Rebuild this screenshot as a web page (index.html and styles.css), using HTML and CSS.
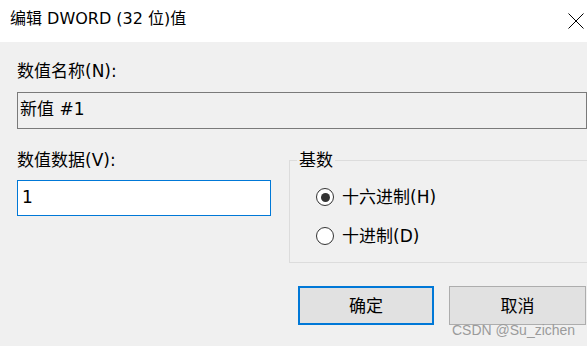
FILE: index.html
```html
<!DOCTYPE html>
<html lang="zh-CN">
	<head>
		<meta charset="UTF-8" />
		<title>编辑 DWORD (32 位)值</title>
		<link rel="stylesheet" href="styles.css">
	</head>
	<body>
		<div class="dialog">
			<div class="titlebar">
				<span class="title">编辑 DWORD (32 位)值</span>
				<svg class="close" width="16" height="16" viewBox="0 0 16 16">
					<path d="M0.5 0.5L15.5 15.5M15.5 0.5L0.5 15.5" stroke="#000" stroke-width="1" fill="none" />
				</svg>
			</div>

			<div class="content">
				<div class="label">数值名称(N):</div>
				<div class="field readonly">新值 #1</div>

				<div class="row">
					<div class="data">
						<div class="label">数值数据(V):</div>
						<div class="field edit">1</div>
					</div>

					<fieldset class="base">
						<legend>基数</legend>
						<div class="radios">
							<label class="radio checked"><span class="dot"></span>十六进制(H)</label>
							<label class="radio"><span class="dot"></span>十进制(D)</label>
						</div>
					</fieldset>
				</div>

				<div class="buttons">
					<div class="btn default">确定</div>
					<div class="btn">取消</div>
				</div>
			</div>

			<div class="watermark">CSDN @Su_zichen</div>
		</div>
	</body>
</html>
```

FILE: styles.css
```css
:root {
	--face: #f0f0f0;
	--accent: #0078d7;
	--btn-face: #e1e1e1;
	--btn-border: #adadad;
}

* {
	box-sizing: border-box;
	margin: 0;
	padding: 0;
}

body {
	font-family: "DejaVu Sans", "Noto Sans CJK SC", sans-serif;
	font-size: 17px;
	color: #000;
	background: var(--face);
	width: 587px;
	height: 346px;
	overflow: hidden;
}

.dialog {
	position: relative;
	height: 100%;
}

.titlebar {
	height: 42px;
	background: #fff;
	display: flex;
	align-items: center;
	justify-content: space-between;
	padding: 0 3px 4px 10px;
}

.title {
	font-size: 16px;
	line-height: 20px;
}

.close {
	display: block;
	margin-top: 3px;
}

.content {
	padding: 19px 1px 0 17px;
}

.label {
	line-height: 20px;
}

.field {
	line-height: 20px;
	display: flex;
	align-items: center;
}

.readonly {
	margin-top: 11px;
	margin-right: -1px;
	height: 37px;
	border: 1px solid #7a7a7a;
	background: var(--face);
	padding: 0 0 4px 2px;
}

.row {
	display: grid;
	grid-template-columns: 254px 1fr;
	column-gap: 18px;
	margin-top: 21px;
}

.edit {
	margin-top: 10px;
	height: 36px;
	border: 1px solid var(--accent);
	background: #fff;
	padding: 0 0 2px 4px;
}

.base {
	border: 1px solid #dcdcdc;
	margin-right: -3px;
	min-width: 0;
}

.base legend {
	margin-left: 7px;
	padding: 0 2px;
	line-height: 20px;
}

.radios {
	display: flex;
	flex-direction: column;
	gap: 19px;
	padding: 17px 0 16px 26px;
}

.radio {
	display: flex;
	align-items: center;
	gap: 8px;
	line-height: 20px;
}

.dot {
	width: 18px;
	height: 18px;
	border: 1px solid #333;
	border-radius: 50%;
	background: #fff;
	display: flex;
	align-items: center;
	justify-content: center;
}

.checked .dot::after {
	content: "";
	width: 9px;
	height: 9px;
	border-radius: 50%;
	background: #333;
}

.buttons {
	display: flex;
	justify-content: flex-end;
	gap: 15px;
	margin-top: 23px;
}

.btn {
	width: 137px;
	height: 39px;
	background: var(--btn-face);
	border: 1px solid var(--btn-border);
	display: flex;
	align-items: center;
	justify-content: center;
	padding-bottom: 2px;
}

.btn.default {
	width: 136px;
	border: 2px solid var(--accent);
}

.watermark {
	position: absolute;
	left: 452px;
	top: 322px;
	font-family: "Liberation Sans", sans-serif;
	font-size: 14px;
	line-height: 16px;
	color: #9b9b9b;
}
```
